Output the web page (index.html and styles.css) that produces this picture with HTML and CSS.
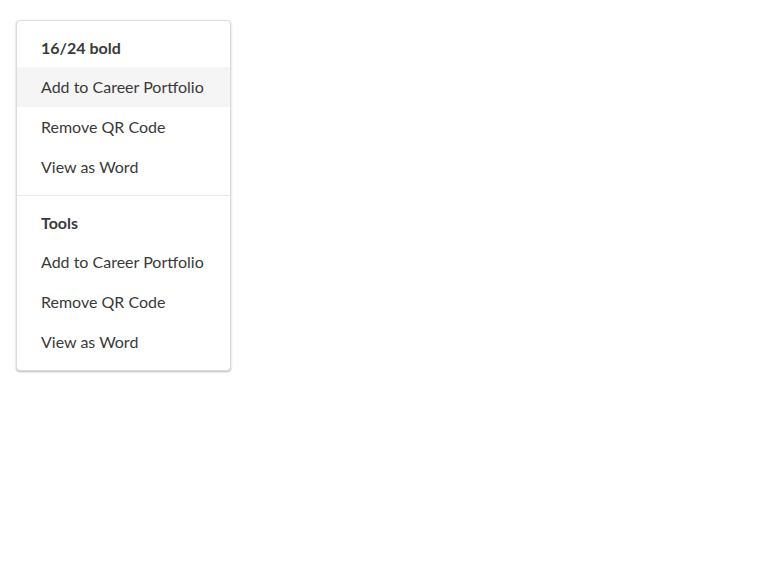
FILE: index.html
```html
<!DOCTYPE html>
<html lang="en">
<head>
<meta charset="utf-8">
<title>Menu</title>
<link rel="stylesheet" href="styles.css">
</head>
<body>
<div class="menu" role="menu">
  <div class="group">
    <div class="group-label">16/24 bold</div>
    <div class="item is-highlighted" role="menuitem">Add to Career Portfolio</div>
    <div class="item" role="menuitem">Remove QR Code</div>
    <div class="item" role="menuitem">View as Word</div>
  </div>
  <div class="group">
    <div class="group-label">Tools</div>
    <div class="item" role="menuitem">Add to Career Portfolio</div>
    <div class="item" role="menuitem">Remove QR Code</div>
    <div class="item" role="menuitem">View as Word</div>
  </div>
</div>
</body>
</html>
```
FILE: styles.css
```css
html, body {
  margin: 0;
  background: #ffffff;
}
body {
  padding: 20px 16px;
  font-family: Lato, "Open Sans", sans-serif;
  color: #333333;
}
.menu {
  width: 213px;
  background: #ffffff;
  border: 1px solid #dcdcdc;
  border-radius: 4px;
  box-shadow: 0 1px 2px rgba(0, 0, 0, 0.28);
}
.group {
  padding-bottom: 8px;
}
.group + .group {
  border-top: 1px solid #e8e8e8;
}
.group-label {
  padding: 15px 24px 7px;
  font-size: 16px;
  font-weight: 700;
  line-height: 24px;
  color: #3a3a3a;
}
.item {
  padding: 0 24px;
  font-size: 16px;
  line-height: 40px;
  white-space: nowrap;
  color: #3a3a3a;
}
.is-highlighted {
  background: #f5f5f5;
}
```
